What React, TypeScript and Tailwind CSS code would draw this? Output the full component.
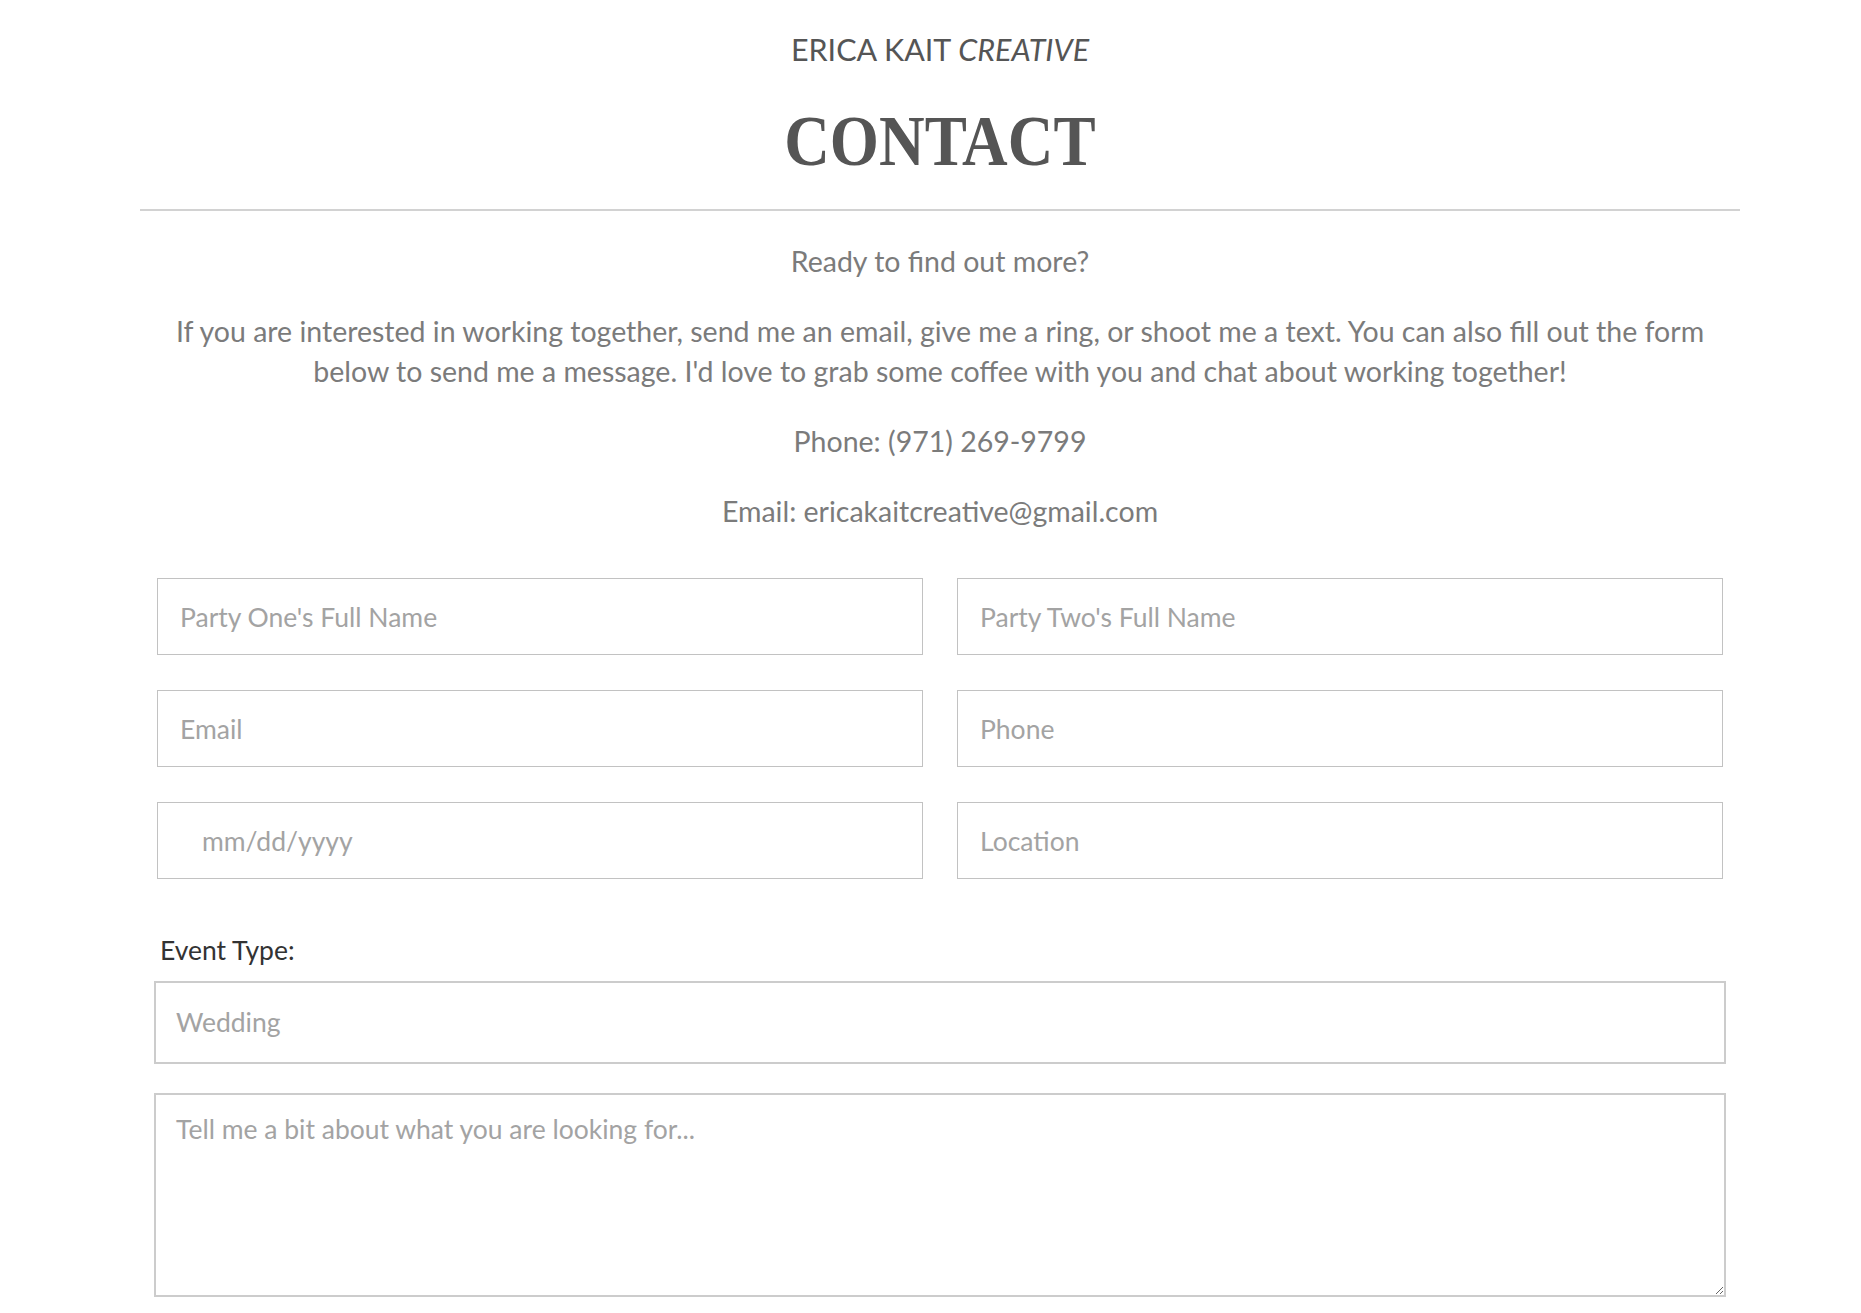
import React from "react";

const body = { fontFamily: "Lato, 'Open Sans', sans-serif" };

function Field({ placeholder, indent }: { placeholder: string; indent?: boolean }) {
  return (
    <input
      type="text"
      placeholder={placeholder}
      className={
        "h-[77px] w-full border border-[#c2c2c2] bg-white text-[26.5px] text-[#777] outline-none placeholder:text-[#a3a3a3] " +
        (indent ? "pl-[44px]" : "pl-[22px]")
      }
      style={body}
    />
  );
}

export default function App() {
  return (
    <div className="min-h-screen bg-white pl-[19px]" style={body}>
      <div className="mx-auto w-[1600px]">
        {/* Header */}
        <header className="flex flex-col items-center pt-[31px]">
          <div className="h-[36px] text-[30.5px] leading-[36px] text-[#555]">
            ERICA KAIT <span className="italic">CREATIVE</span>
          </div>
          <h1
            className="mt-[34px] h-[80px] scale-x-[0.89] text-[71px] font-bold leading-[80px] text-[#555]"
            style={{ fontFamily: "'Liberation Serif', 'Times New Roman', serif" }}
          >
            CONTACT
          </h1>
        </header>

        <div className="mt-[28px] h-[2px] w-full bg-[#d2d2d2]" />

        {/* Intro */}
        <div className="mt-[30px] flex flex-col items-center gap-[30px] text-center text-[28.5px] leading-[40px] text-[#7b7b7b]">
          <p>Ready to find out more?</p>
          <p>
            If you are interested in working together, send me an email, give me a ring, or shoot me a text. You can also fill out the form
            <br />
            below to send me a message. I'd love to grab some coffee with you and chat about working together!
          </p>
          <p>Phone: (971) 269-9799</p>
          <p>Email: ericakaitcreative@gmail.com</p>
        </div>

        {/* Form */}
        <form className="mt-[47px] px-[14px]">
          <div className="grid grid-cols-2 gap-x-[34px] gap-y-[35px] px-[3px]">
            <Field placeholder="Party One's Full Name" />
            <Field placeholder="Party Two's Full Name" />
            <Field placeholder="Email" />
            <Field placeholder="Phone" />
            <Field placeholder="mm/dd/yyyy" indent />
            <Field placeholder="Location" />
          </div>

          <label className="mt-[56px] block pl-[6px] text-[26.5px] leading-[30px] text-[#333]">Event Type:</label>
          <select
            className="mt-[16px] block h-[83px] w-full appearance-none border-2 border-[#cccccc] bg-white pl-[20px] text-[26.5px] text-[#a3a3a3] outline-none"
            style={body}
            defaultValue="Wedding"
          >
            <option>Wedding</option>
            <option>Engagement</option>
            <option>Elopement</option>
            <option>Other</option>
          </select>

          <textarea
            placeholder="Tell me a bit about what you are looking for..."
            className="mt-[29px] block h-[204px] w-full border-2 border-[#cccccc] bg-white px-[20px] pt-[18px] text-[26.5px] leading-[32px] text-[#777] outline-none placeholder:text-[#a3a3a3]"
            style={body}
          />
        </form>
      </div>
    </div>
  );
}
